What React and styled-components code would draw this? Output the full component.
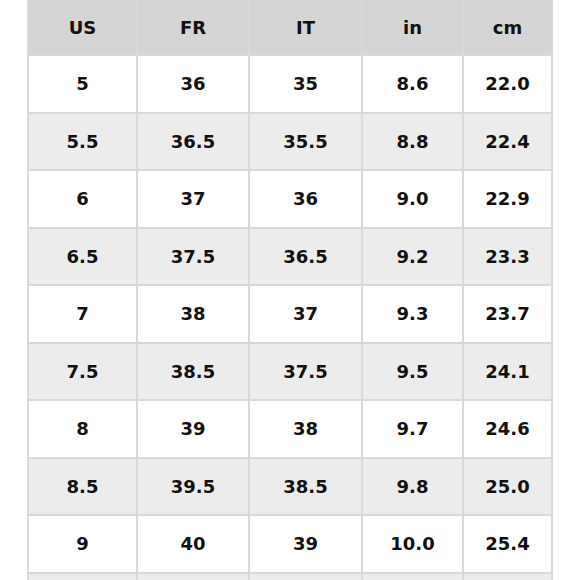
import React from 'react';
import styled, { createGlobalStyle } from 'styled-components';

const Global = createGlobalStyle`
  html, body {
    margin: 0;
    padding: 0;
    background: #fff;
    font-family: "DejaVu Sans", "Liberation Sans", Arial, sans-serif;
  }
`;

const columns = ['US', 'FR', 'IT', 'in', 'cm'];

const sizes = [
  ['5', '36', '35', '8.6', '22.0'],
  ['5.5', '36.5', '35.5', '8.8', '22.4'],
  ['6', '37', '36', '9.0', '22.9'],
  ['6.5', '37.5', '36.5', '9.2', '23.3'],
  ['7', '38', '37', '9.3', '23.7'],
  ['7.5', '38.5', '37.5', '9.5', '24.1'],
  ['8', '39', '38', '9.7', '24.6'],
  ['8.5', '39.5', '38.5', '9.8', '25.0'],
  ['9', '40', '39', '10.0', '25.4'],
];

const Page = styled.div`
  width: 580px;
  height: 580px;
  overflow: hidden;
  padding-left: 27px;
  box-sizing: border-box;
`;

const Table = styled.div`
  width: 526px;
  box-sizing: border-box;
  border-left: 2px solid #d9d9d9;
  border-right: 2px solid #d9d9d9;
`;

const Row = styled.div`
  display: grid;
  grid-template-columns: 109px 112px 113px 101px 1fr;
  height: ${(p) => (p.$head ? '56px' : '57.5px')};
  background: ${(p) => (p.$head ? '#d5d5d5' : p.$shaded ? '#ececec' : '#fff')};
  border-bottom: 2px solid #d9d9d9;
  box-sizing: border-box;
`;

const Cell = styled.div`
  display: flex;
  align-items: center;
  justify-content: center;
  border-right: 2px solid #d9d9d9;
  font-size: 18px;
  font-weight: 700;
  color: #111;
  &:last-child {
    border-right: none;
  }
`;

export default function App() {
  return (
    <Page>
      <Global />
      <Table>
        <Row $head>
          {columns.map((c) => (
            <Cell key={c}>{c}</Cell>
          ))}
        </Row>
        {sizes.map((r, i) => (
          <Row key={r[0]} $shaded={i % 2 === 1}>
            {r.map((v, j) => (
              <Cell key={j}>{v}</Cell>
            ))}
          </Row>
        ))}
        {/* next row is cut off by the frame */}
        <Row $shaded>
          {columns.map((c) => (
            <Cell key={c} />
          ))}
        </Row>
      </Table>
    </Page>
  );
}
